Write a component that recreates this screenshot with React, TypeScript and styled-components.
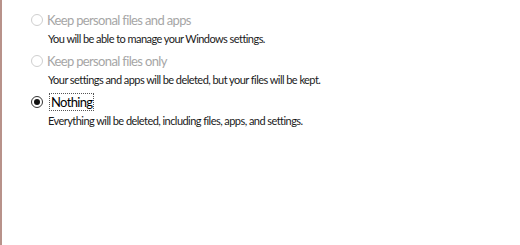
import React from "react";
import styled, { createGlobalStyle } from "styled-components";

const GlobalStyle = createGlobalStyle`
  html, body {
    margin: 0;
    padding: 0;
    background: #ffffff;
  }
  body {
    font-family: Lato, "Noto Sans", "Liberation Sans", sans-serif;
  }
`;

const Page = styled.div`
  width: 520px;
  height: 245px;
  box-sizing: border-box;
  border-left: 2px solid #b8928a;
  background: #ffffff;
  padding: 10px 0 0 29px;
`;

const OptionList = styled.div`
  display: flex;
  flex-direction: column;
  gap: 3px;
`;

const Option = styled.div`
  display: flex;
  flex-direction: column;
`;

const LabelRow = styled.label<{ disabled?: boolean }>`
  display: flex;
  align-items: center;
  height: 20px;
  font-size: 13px;
  letter-spacing: -0.65px;
  color: ${(p) => (p.disabled ? "#a6a6a6" : "#000000")};
  cursor: ${(p) => (p.disabled ? "default" : "pointer")};
`;

const Radio = styled.span<{ checked?: boolean; disabled?: boolean }>`
  position: relative;
  width: 12px;
  height: 12px;
  box-sizing: border-box;
  border-radius: 50%;
  border: 1px solid ${(p) => (p.disabled ? "#cfcfcf" : "#333333")};
  background: #ffffff;
  flex-shrink: 0;
  margin-right: 2px;

  ${(p) =>
    p.checked
      ? `
    &::after {
      content: "";
      position: absolute;
      left: 2px;
      top: 2px;
      width: 6px;
      height: 6px;
      border-radius: 50%;
      background: #111111;
    }
  `
      : null}
`;

const LabelText = styled.span<{ focused?: boolean }>`
  padding: 0 1px;
  margin-left: ${(p) => (p.focused ? "4px" : "0")};
  border: 1px dotted ${(p) => (p.focused ? "#555555" : "transparent")};
  line-height: 16px;
`;

const Description = styled.div`
  font-size: 11px;
  letter-spacing: -0.55px;
  color: #1a1a1a;
  margin: 0 0 0 17px;
  height: 18px;
  line-height: 18px;
`;

type Item = {
  label: string;
  description: string;
  disabled?: boolean;
  checked?: boolean;
};

const items: Item[] = [
  {
    label: "Keep personal files and apps",
    description: "You will be able to manage your Windows settings.",
    disabled: true,
  },
  {
    label: "Keep personal files only",
    description: "Your settings and apps will be deleted, but your files will be kept.",
    disabled: true,
  },
  {
    label: "Nothing",
    description: "Everything will be deleted, including files, apps, and settings.",
    checked: true,
  },
];

const App = () => {
  return (
    <>
      <GlobalStyle />
      <Page>
        <OptionList>
          {items.map((item) => (
            <Option key={item.label}>
              <LabelRow disabled={item.disabled}>
                <Radio checked={item.checked} disabled={item.disabled} />
                <LabelText focused={item.checked}>{item.label}</LabelText>
              </LabelRow>
              <Description>{item.description}</Description>
            </Option>
          ))}
        </OptionList>
      </Page>
    </>
  );
};

export default App;
